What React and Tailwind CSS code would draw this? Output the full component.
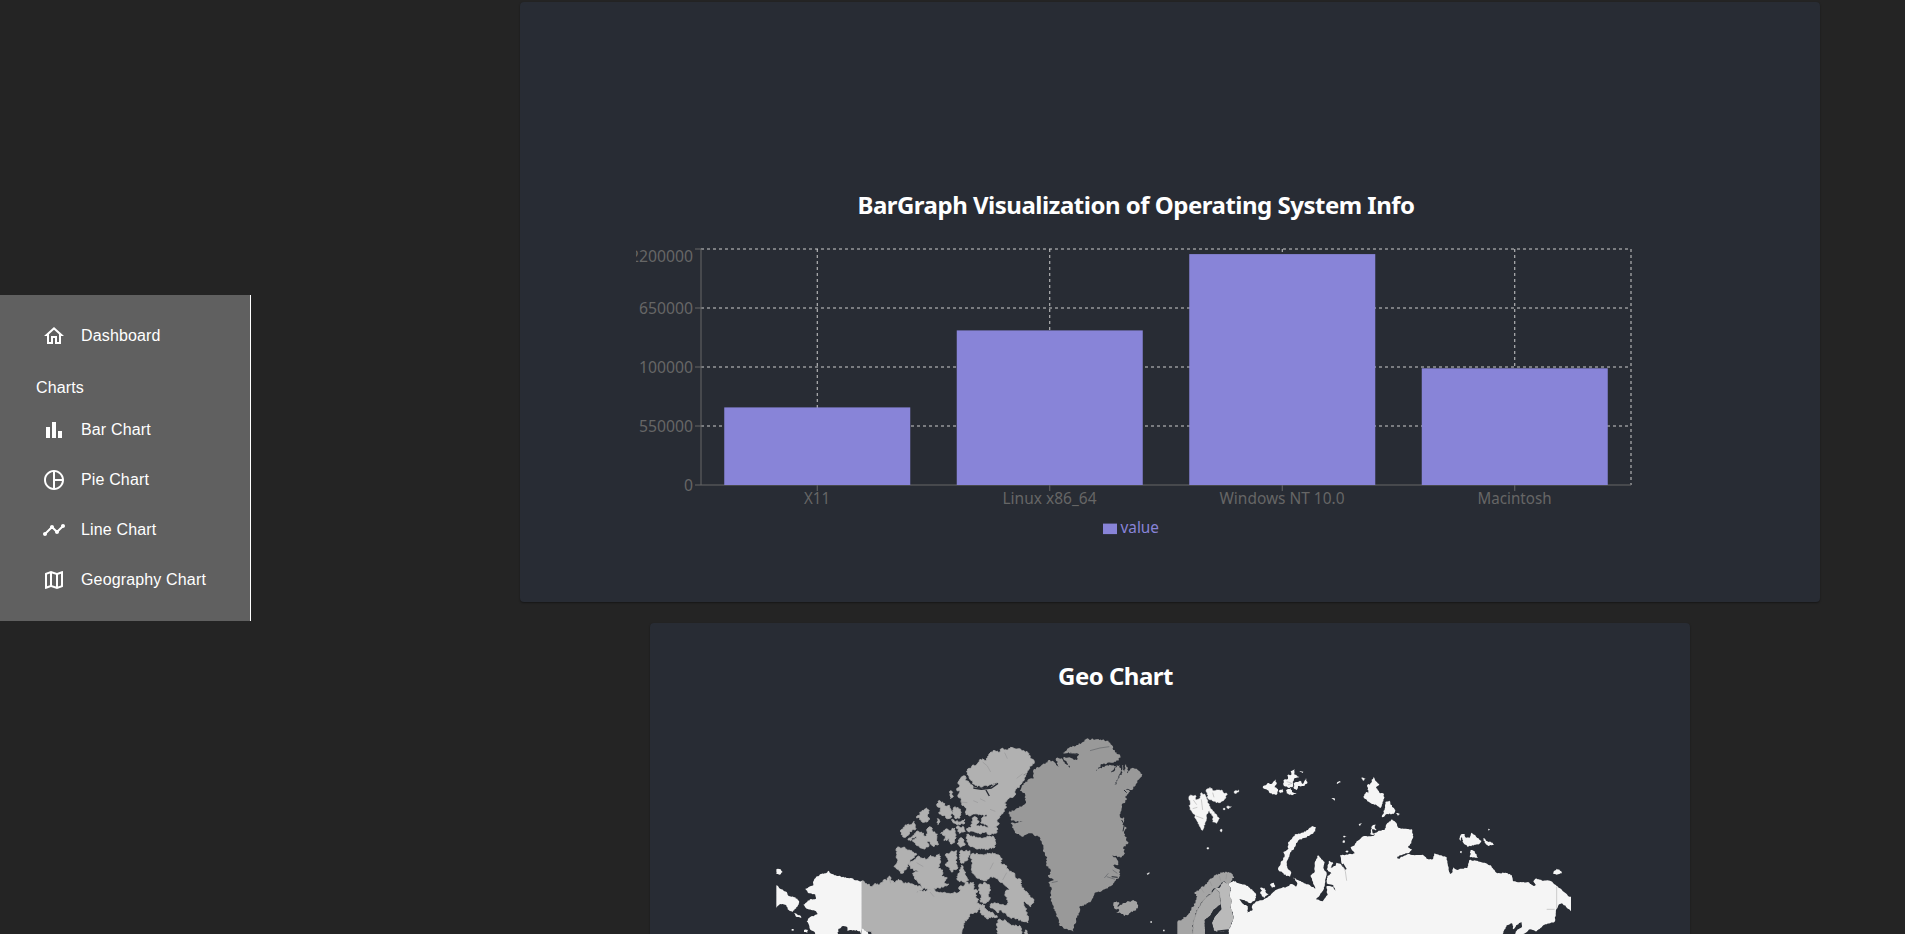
import React from 'react';

const NAV = {
  home: 'm12 5.69 5 4.5V18h-2v-6H9v6H7v-7.81zM12 3 2 12h3v8h6v-6h2v6h6v-8h3z',
  bar: 'M4 9h4v11H4zm12 4h4v7h-4zm-6-9h4v16h-4z',
  pie: 'M12 2C6.48 2 2 6.48 2 12s4.48 10 10 10 10-4.48 10-10S17.52 2 12 2m1 2.07c3.61.45 6.48 3.33 6.93 6.93H13zM4 12c0-4.06 3.07-7.44 7-7.93v15.87c-3.93-.5-7-3.88-7-7.94m9 7.93V13h6.93c-.45 3.61-3.32 6.48-6.93 6.93',
  line: 'M23 8c0 1.1-.9 2-2 2-.18 0-.35-.02-.51-.07l-3.56 3.55c.05.16.07.34.07.52 0 1.1-.9 2-2 2s-2-.9-2-2c0-.18.02-.36.07-.52l-2.55-2.55c-.16.05-.34.07-.52.07s-.36-.02-.52-.07l-4.55 4.56c.05.16.07.33.07.51 0 1.1-.9 2-2 2s-2-.9-2-2 .9-2 2-2c.18 0 .35.02.51.07l4.56-4.55C8.02 9.36 8 9.18 8 9c0-1.1.9-2 2-2s2 .9 2 2c0 .18-.02.36-.07.52l2.55 2.55c.16-.05.34-.07.52-.07s.36.02.52.07l3.55-3.56C19.02 8.35 19 8.18 19 8c0-1.1.9-2 2-2s2 .9 2 2',
  map: 'M20.5 3l-.16.03L15 5.1 9 3 3.36 4.9c-.21.07-.36.25-.36.48V20.5c0 .28.22.5.5.5l.16-.03L9 18.9l6 2.1 5.64-1.9c.21-.07.36-.25.36-.48V3.5c0-.28-.22-.5-.5-.5zM10 5.47l4 1.4v11.66l-4-1.4V5.47zm-5 .99l3-1.01v11.7l-3 1.16V6.46zm14 11.08l-3 1.01V6.86l3-1.16v11.84z',
};

function NavItem({ icon, children }) {
  return (
    <a className="flex h-[50px] items-center pl-[42px]">
      <svg viewBox="0 0 24 24" className="size-6 fill-white">
        <path d={NAV[icon]} />
      </svg>
      <span className="ml-[15px]">{children}</span>
    </a>
  );
}

function Sidebar() {
  return (
    <nav className="mt-[295px] h-[326px] w-[251px] shrink-0 border-r border-white bg-[#606060] py-4 font-['Liberation_Sans',sans-serif] text-base tracking-[0.15px] text-white">
      <NavItem icon="home">Dashboard</NavItem>
      <h6 className="flex h-11 items-center pt-[10px] pl-9">Charts</h6>
      <NavItem icon="bar">Bar Chart</NavItem>
      <NavItem icon="pie">Pie Chart</NavItem>
      <NavItem icon="line">Line Chart</NavItem>
      <NavItem icon="map">Geography Chart</NavItem>
    </nav>
  );
}

const BARS = [
  { name: 'X11', top: 163.4, w: 26 },
  { name: 'Linux x86_64', top: 86.4, w: 94 },
  { name: 'Windows NT 10.0', top: 10.1, w: 125 },
  { name: 'Macintosh', top: 124.3, w: 74 },
];
const TICKS = [
  { label: '2200000', y: 5, base: 18, w: 63 },
  { label: '650000', y: 64, base: 70, w: 54 },
  { label: '100000', y: 123, base: 129, w: 54 },
  { label: '550000', y: 182, base: 188, w: 54 },
  { label: '0', y: 241, base: 247, w: 9 },
];

function BarGraph() {
  return (
    <svg width="1000" height="300" className="mt-[23px] block overflow-hidden font-['Noto_Sans',sans-serif] text-[15.5px]">
      <g stroke="#ccc" strokeDasharray="3 3">
        {TICKS.slice(0, 4).map((t) => <line key={t.y} x1="65" x2="995" y1={t.y} y2={t.y} />)}
        {BARS.map((b, i) => <line key={b.name} x1={181.25 + i * 232.5} x2={181.25 + i * 232.5} y1="5" y2="241" />)}
        <line x1="995" x2="995" y1="5" y2="241" />
      </g>
      <g stroke="#666">
        <line x1="65" x2="995" y1="241" y2="241" />
        <line x1="65" x2="65" y1="5" y2="241" />
        {TICKS.map((t) => <line key={t.y} x1="59" x2="65" y1={t.y} y2={t.y} />)}
        {BARS.map((b, i) => <line key={b.name} x1={181.25 + i * 232.5} x2={181.25 + i * 232.5} y1="241" y2="247" />)}
      </g>
      <g fill="#666">
        {TICKS.map((t) => (
          <text key={t.y} x="57" y={t.base} textAnchor="end" textLength={t.w} lengthAdjust="spacingAndGlyphs">{t.label}</text>
        ))}
        {BARS.map((b, i) => (
          <text key={b.name} x={181 + i * 232.5} y="260" textAnchor="middle" textLength={b.w} lengthAdjust="spacingAndGlyphs">{b.name}</text>
        ))}
      </g>
      {BARS.map((b, i) => (
        <rect key={b.name} x={88.25 + i * 232.5} y={b.top} width="186" height={241 - b.top} fill="#8884d8" />
      ))}
      <rect x="467" y="279.6" width="14" height="10.5" fill="#8884d8" />
      <text x="484.5" y="289" fill="#8884d8" textLength="38.5" lengthAdjust="spacingAndGlyphs">value</text>
    </svg>
  );
}

// Builds a closed coastline: every edge is subdivided and nudged sideways.
function coast(points, rough = 2.2) {
  const p = points.trim().split(/\s+/).map((s) => s.split(',').map(Number));
  let seed = 17;
  const rnd = () => {
    seed = (seed * 16807) % 2147483647;
    return seed / 2147483647 - 0.5;
  };
  let d = '';
  p.forEach(([x, y], i) => {
    const [nx, ny] = p[(i + 1) % p.length];
    d += `${i ? 'L' : 'M'}${x},${y}`;
    const len = Math.hypot(nx - x, ny - y);
    const straight = (x === nx && len > 30) || len > 180 || (y >= 612 && ny >= 612);
    const n = straight ? 1 : Math.floor(len / 3.5);
    for (let k = 1; k < n; k += 1) {
      const t = k / n;
      const o = rnd() * rough * 2.6;
      d += `L${(x + (nx - x) * t - ((ny - y) / len) * o).toFixed(1)},${(y + (ny - y) * t + ((nx - x) / len) * o).toFixed(1)}`;
    }
  });
  return d + 'Z';
}

const CANADA = [
  '305,453 320,461 336,470 345,460 360,464 370,450 380,452 388,438 394,452 402,458 415,448 428,458 445,458 470,466 492,474 470,487 500,482 520,476 530,486 560,490 580,490 600,484 598,470 612,468 618,450 624,462 640,456 640,478 652,482 646,500 656,508 650,520 662,524 650,548 632,549 625,562 610,580 605,612 605,616 340,616 330,604 305,598',
  '410,354 430,352 440,358 455,362 470,374 452,388 444,402 440,416 426,430 412,418 402,410 412,396 410,376',
  '472,380 486,384 500,388 512,376 524,382 538,372 540,400 534,412 548,420 545,436 562,444 552,458 566,462 552,470 530,474 508,478 490,474 480,460 465,448 458,430 476,424 452,416 446,404 462,390',
  '556,376 572,366 590,362 590,380 588,400 594,414 582,418 574,426 566,412 556,402 566,392',
  '600,364 630,362 630,374 620,392 604,400 600,385',
  '604,406 612,420 618,438 626,450 610,456 592,450 594,436 600,424',
  '632,378 640,370 668,374 690,370 712,374 724,384 724,402 736,406 746,420 764,430 768,445 784,450 782,468 796,484 810,500 822,510 812,530 802,522 788,510 794,530 802,548 804,578 788,574 770,566 750,562 735,548 720,540 712,548 700,536 690,530 694,520 712,520 735,528 748,518 738,500 736,486 748,478 730,462 712,446 690,440 680,452 660,448 644,436 634,420 638,400',
  '656,466 676,458 688,464 692,480 684,492 690,508 674,520 660,512 664,494 656,482',
  '656,532 668,522 680,540 700,550 712,562 694,560 680,566 664,550',
  '714,570 738,572 752,584 782,590 784,612 784,616 716,616 710,596',
  '796,600 804,612 804,616 794,616',
  '622,122 636,108 650,104 660,88 680,90 690,70 705,62 720,66 724,56 740,60 752,52 775,56 788,62 804,68 810,82 823,96 812,108 802,124 790,136 800,132 784,162 770,176 762,198 746,206 736,216 738,234 724,252 712,268 716,284 706,292 688,292 676,282 662,278 668,262 690,256 660,252 640,252 630,258 618,254 620,236 606,226 604,208 594,200 600,184 590,180 600,166 594,156 606,140 616,138 618,152 630,160 640,172 660,178 690,176 700,166 714,160 690,164 668,170 645,166 630,148 624,136',
  '640,262 652,264 656,278 648,288 662,286 680,292 700,290 712,294 708,310 690,314 676,306 660,312 644,306 624,304 620,296 634,290',
  '620,314 634,318 650,322 670,324 690,318 702,322 706,336 702,354 680,357 650,357 632,350 622,336',
  '590,290 612,292 616,304 598,310',
  '600,324 612,330 614,346 602,352 592,342',
  '556,298 568,302 584,294 588,316 584,334 572,342 568,326 552,332 556,316 542,310',
  '534,214 548,216 556,228 568,226 576,244 572,264 562,266 554,256 538,252 542,236 532,230',
  '580,234 594,232 604,246 600,264 588,266 580,254',
  '574,270 598,276 614,268 612,282 588,282',
  '504,294 514,292 520,306 532,312 530,328 536,342 518,348 508,334 496,328',
  '468,306 484,306 498,322 504,340 506,350 490,356 478,350 466,340 458,334 470,320 454,322',
  '470,264 486,242 500,234 508,242 502,256 508,264 500,276 484,274 480,264',
  '422,306 430,292 444,282 454,284 462,274 466,286 468,296 450,304 444,316 432,322',
  '568,186 576,184 578,202 572,206',
  '444,330 456,320 452,332',
  '532,266 540,276 534,284',
];

const USA = [
  '305,453 285,451 280,446 260,444 235,438 216,432 204,422 198,430 180,433 168,442 160,454 160,466 136,476 146,490 166,494 168,506 150,508 130,524 140,536 168,544 173,552 150,562 140,574 148,588 150,598 164,606 166,616 232,616 236,596 250,588 262,592 262,602 282,600 300,604 305,616',
  '49,466 64,478 80,486 86,498 106,502 118,516 114,526 98,546 86,540 76,524 60,522 49,534',
  '49,418 62,418 68,426 58,434 49,432',
  '102,550 120,556 124,564 108,560',
  '132,600 144,600 142,608 132,606',
  '95,597 101,597 101,602 95,602',
  '305,596 318,602 330,616 305,616',
];

const GREENLAND =
  '318,28 355,27 380,32 395,45 400,60 421,78 415,92 400,98 365,102 348,123 375,108 400,106 408,108 400,120 388,130 404,122 410,106 420,104 421,130 405,165 425,130 427,104 432,128 438,102 444,130 455,115 470,116 487,132 470,160 455,180 432,175 450,185 435,200 440,210 425,225 422,250 420,262 435,265 428,285 440,295 432,310 445,340 430,352 435,370 425,382 398,375 415,395 415,405 395,405 420,420 421,438 400,460 375,478 348,487 335,510 318,524 300,528 298,548 288,568 282,590 280,605 255,597 240,588 230,560 218,525 210,500 215,475 205,458 222,450 205,440 212,420 198,405 200,380 190,365 190,345 180,330 178,320 150,310 130,320 105,308 100,295 92,280 128,276 95,272 86,248 110,235 135,222 137,205 135,190 120,183 125,170 145,148 162,145 160,120 185,105 210,90 225,98 238,118 228,85 245,85 270,115 250,82 275,85 290,90 297,72 248,68 265,55 290,45 305,38';
const ICELAND =
  '400,522 410,512 418,522 412,530 428,520 440,516 455,512 468,514 474,530 464,542 448,550 434,558 422,550 408,548 418,540 402,534';
const NORWAY =
  '52,546 66,538 84,524 94,506 106,490 112,470 104,456 118,448 134,436 150,416 166,406 186,398 206,396 222,410 214,422 206,432 190,424 176,440 160,446 152,462 130,480 112,510 100,545 98,590 52,590';
const SWEDEN =
  '165,446 178,456 182,492 160,510 150,528 134,540 136,590 98,590 100,545 112,510 130,480 152,462';
const FINLAND =
  '165,446 178,444 190,424 206,432 212,448 208,468 216,482 212,500 222,534 206,570 180,576 162,572 156,548 164,530 184,508 182,492 178,456';

const SVALBARD = [
  '88,168 106,166 108,180 118,176 124,158 136,166 144,190 158,214 168,222 178,236 170,250 158,246 160,232 148,212 140,222 136,246 128,271 118,258 110,240 104,232 106,226 90,208',
  '138,152 150,142 160,152 170,150 186,150 190,158 202,162 192,180 176,188 162,184 146,178',
  '222,156 236,150 236,156 224,160',
  '200,200 214,200 206,206',
  '190,205 195,205 195,209 190,209',
  '180,272 186,268 184,276',
  '141,323 146,323 146,327 141,327',
];

const ARCTIC = [
  '308,142 322,130 334,132 346,118 350,132 344,142 354,148 350,164 330,160 322,150',
  '370,122 384,116 382,106 394,104 392,94 404,88 404,104 418,110 404,114 398,126 400,138 388,144 372,138',
  '402,130 420,122 428,132 438,114 442,130 430,138 414,138 410,150 402,146',
  '378,152 392,144 396,156 410,160 396,166 380,160',
  '356,154 368,146 370,154 360,160',
  '418,96 430,95 428,99',
  '530,130 540,123 542,127 532,132',
  '514,176 524,175 524,182',
  '603,114 617,114 612,122',
  '622,134 630,134 641,110 648,124 658,132 648,144 660,160 670,160 672,176 668,190 660,205 650,196 636,192 622,184 610,170 618,156 626,160',
  '666,232 674,206 676,186 688,182 696,200 706,210 700,222 682,222',
  '708,220 720,222 714,228',
  '596,254 606,250 600,258',
  '636,258 648,254 644,262 650,270 636,268 638,280 654,276 650,284 632,284',
  '549,288 560,290 552,293',
  '548,303 555,302 554,308 548,308',
  '556,334 566,333 562,338',
  '362,370 374,348 370,336 384,328 384,310 396,296 408,282 430,278 446,266 456,258 468,262 466,274 450,286 432,294 416,300 408,310 402,326 390,338 386,352 380,368 382,384 394,398 390,410 372,404 354,388',
  '300,444 314,444 318,458 326,462 312,474 300,460 306,452',
  '330,434 342,428 346,438 336,444',
];

// Mainland coast, in thirds of a pixel from (1160, 740).
const RUSSIA =
  '206,432 220,422 236,430 256,434 270,444 288,462 286,480 272,490 250,480 238,478 250,492 264,500 262,518 278,510 276,498 290,484 310,480 328,468 340,456 356,446 380,440 394,432 408,440 412,430 400,412 414,420 432,430 450,436 466,446 458,424 452,406 464,396 464,372 474,346 484,358 494,366 490,384 500,400 496,424 492,446 480,464 468,478 488,484 502,466 500,438 520,440 526,452 520,436 500,430 502,408 514,400 500,388 508,362 520,370 512,384 528,376 530,368 544,374 560,392 546,372 540,346 584,340 572,322 584,316 590,304 600,298 612,288 640,288 656,272 674,270 680,252 696,238 706,246 716,264 738,266 756,268 760,290 754,310 744,322 756,328 748,338 720,346 712,354 728,350 744,342 764,346 788,344 800,356 818,358 824,340 842,346 860,352 864,378 870,402 878,396 880,382 892,390 900,386 922,384 928,360 948,362 970,368 992,376 1000,388 1012,400 1036,398 1056,406 1060,424 1070,426 1090,426 1108,428 1120,438 1126,434 1120,424 1126,416 1150,422 1170,422 1190,438 1206,450 1220,462 1224,468 1233,470 1233,514 1218,500 1206,490 1196,494 1188,510 1186,530 1184,545 1150,556 1130,574 1110,568 1090,582 1080,590 1060,590 1070,572 1086,560 1084,546 1072,554 1060,568 1056,550 1040,556 1028,582 1020,600 210,600 206,570 222,534 212,500 216,482 208,468 212,448';
const RUSSIA_EAST = [
  '902,284 914,282 916,292 928,294 934,278 946,286 952,294 964,302 958,312 944,314 922,320 910,308',
  '970,294 982,304 998,308 1002,314 984,318 974,308',
  '900,287 905,284 903,302 898,296',
  '932,330 944,334 954,354 930,352',
  '984,266 990,268 986,272',
  '1180,398 1190,386 1204,394 1206,400 1190,404 1180,402',
  '900,334 906,334 904,340',
];

const shape = (points, fill, key, rough) => <path key={key} d={coast(points, rough)} fill={fill} />;

function WorldMap() {
  return (
    <svg width="840" height="204" viewBox="760 730 840 204" className="mt-[36px] ml-[110px] block overflow-hidden">
      <g transform="translate(760 730) scale(0.33333)">
        <g stroke="#b1b1b1" strokeWidth="2.5">
          {CANADA.map((s, i) => shape(s, '#b1b1b1', i))}
        </g>
        {USA.map((s, i) => shape(s, '#f5f5f5', i, 1.2))}
        <path d="M658 170l20 12 8 16M668 96l14 12 10 18M734 68l8 18M770 145l18-14M640 212l14 6M600 216l22 2M660 206l16 8M690 238l16 6M470 398l20 12M700 398l-10 20M740 428l-12 22M510 486l12 14M388 444l4 16" stroke="#8f9092" strokeWidth="1.5" fill="none" />
        <path d="M678 180l10 18M640 174l24 4 30-4 20-14M595 360v50M520 290l10 20M705 490l-12 16M722 494l10 18" stroke="#282c34" strokeWidth="4" fill="none" />
      </g>
      <g transform="translate(980 730) scale(0.33333)">
        {shape(GREENLAND, '#999999', 'greenland')}
        {shape(ICELAND, '#a3a3a3', 'iceland')}
        <path d="M500 431l8-4 1 3-6 5zM511 574h5v4h-5zM549 599h5v5h-5z" fill="#ddd" />
        <path d="M330 62l30-8 28-4M270 70l22 2M405 165l16-34M380 440l25 8M398 420l14 10M385 430l-12 14M215 458l18-4" stroke="#606368" strokeWidth="2" fill="none" />
        <path d="M425 270l8 14-4 20M432 180l8 8M436 240l-2 30M395 440l18 2" stroke="#282c34" strokeWidth="3" fill="none" />
      </g>
      <g transform="translate(1160 740) scale(0.33333)">
        {shape(RUSSIA, '#f5f5f5', 'russia', 1.1)}
        {shape(NORWAY, '#a5a5a5', 'norway')}
        {shape(SWEDEN, '#ababab', 'sweden', 0.8)}
        {shape(FINLAND, '#bababa', 'finland', 0.8)}
        <path d="M165 446l13 10 4 36M152 462l-22 18-18 30-12 35-2 45M122 444l10 14M150 424l6 14M178 408l4 14M200 402l-2 16" stroke="#909090" strokeWidth="1.5" fill="none" />
        <path d="M182 494l2 14-20 22-8 18 6 24-18 18h-8l-2-50 16-12 10-18z" fill="#282c34" />
        <g stroke="#f5f5f5" strokeWidth="1.5">
          {SVALBARD.map((s, i) => shape(s, '#f5f5f5', i, 1.6))}
        </g>
        {ARCTIC.map((s, i) => shape(s, '#f5f5f5', i, 1.4))}
        {RUSSIA_EAST.map((s, i) => shape(s, '#f5f5f5', i, 1.2))}
        <path d="M100 180l10 14M98 206l14-4M108 228l22 8M124 178l4 32M158 158l4 14M1190 440v66M1160 508h24M380 125l14 4M384 135l14-6M548 374l8 20 4 28" stroke="#b5b5b5" strokeWidth="2" fill="none" />
        <path d="M172 574l34-4M712 352l8 2M548 372l10 16M1110 428l16 8" stroke="#282c34" strokeWidth="5" fill="none" />
      </g>
    </svg>
  );
}

export default function App() {
  return (
    <div className="flex h-[934px] w-full overflow-hidden bg-[#242424]">
      <Sidebar />
      <main className="ml-[269px] flex w-[1300px] shrink-0 flex-col items-center gap-[21px] pt-[2px]">
        <section className="h-[600px] w-full shrink-0 rounded bg-[#282c34] pl-[116px] shadow-[0_1px_2px_rgba(0,0,0,0.4)]">
          <div className="flex w-[1000px] flex-col">
            <h2 className="mt-[187px] h-8 text-center font-['Noto_Sans',sans-serif] text-[24px] leading-8 font-bold tracking-[-0.5px] whitespace-nowrap text-white">
              BarGraph Visualization of Operating System Info
            </h2>
            <BarGraph />
          </div>
        </section>
        <section className="h-[600px] w-[1040px] shrink-0 rounded bg-[#282c34] shadow-[0_1px_2px_rgba(0,0,0,0.4)]">
          <h2 className="mt-[37px] h-8 w-[931px] text-center font-['Noto_Sans',sans-serif] text-[24px] leading-8 font-bold tracking-[-0.5px] text-white">
            Geo Chart
          </h2>
          <div className="pt-[2px]">
            <WorldMap />
          </div>
        </section>
      </main>
    </div>
  );
}
